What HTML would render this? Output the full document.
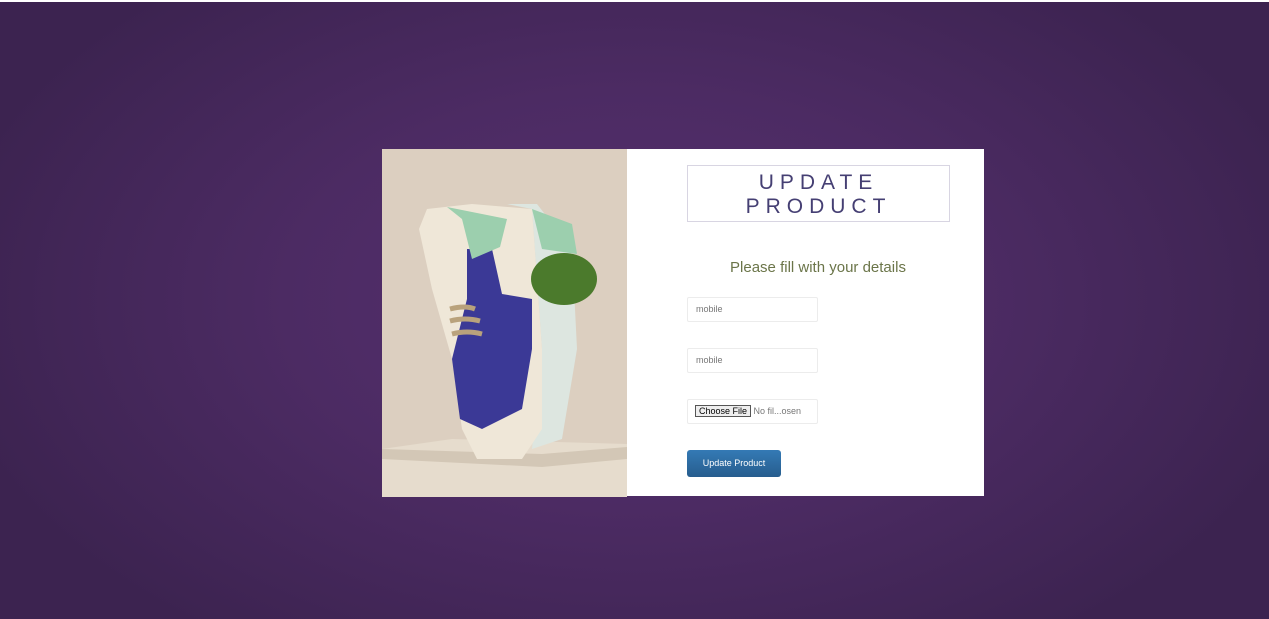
<!DOCTYPE html>
<html><head><style>
html,body{margin:0;padding:0}
body{width:1269px;height:619px;overflow:hidden;position:relative;font-family:"Liberation Sans",sans-serif;
background:radial-gradient(ellipse 700px 420px at 634px 300px,#562f70 0%,#4c2b63 50%,#3c2350 100%);}
.top{position:absolute;left:0;top:0;width:1269px;height:2px;background:#fff}
.img{position:absolute;left:382px;top:149px;width:245px;height:348px;overflow:hidden;background:#dccfc0}
.card{position:absolute;left:627px;top:149px;width:357px;height:347px;background:#fff}
.title{position:absolute;left:60px;top:16px;width:263px;height:57px;border:1px solid #d8d5e2;box-sizing:border-box;text-align:center;color:#453f73;font-size:21px;letter-spacing:6px;line-height:24px;padding-top:5px}
.sub{position:absolute;left:0;width:382px;top:110px;text-align:center;color:#6b7549;font-size:15px}
.in{position:absolute;left:60px;width:131px;height:25px;border:1px solid #ececec;border-radius:2px;box-sizing:border-box;font-size:9px;color:#777;padding:6px 0 0 8px}
.btn{position:absolute;left:60px;top:301px;width:94px;height:27px;border-radius:3px;background:linear-gradient(#347ab5,#275d8e);color:#fff;font-size:9px;text-align:center;line-height:27px}
.cf{display:inline-block;border:1px solid #555;background:#eee;color:#000;font-size:9px;padding:0 3px;line-height:10px;margin-left:-1px}
</style></head><body>
<div class="top"></div>
<div class="img">
<svg width="245" height="348" viewBox="0 0 245 348">
<rect width="245" height="348" fill="#dccfc0"/>
<polygon points="0,300 70,290 245,295 245,348 0,348" fill="#e6dccd"/>
<polygon points="0,300 160,305 245,298 245,310 160,318 0,310" fill="#d3c7b6"/>
<polygon points="125,55 155,55 190,100 195,200 180,290 150,300 160,200 150,60" fill="#dde6e0"/>
<polygon points="45,60 90,55 150,60 160,200 160,280 140,310 95,310 80,280 70,210 50,140 37,80" fill="#efe7d8"/>
<polygon points="85,100 110,100 120,145 150,150 150,200 140,260 100,280 78,270 70,210 85,150" fill="#3b3996"/>
<polygon points="65,58 125,70 118,98 90,110 80,70" fill="#9ccfae"/>
<polygon points="150,60 190,75 195,105 160,100" fill="#9ccfae"/>
<ellipse cx="182" cy="130" rx="33" ry="26" fill="#4b7a2c"/>
<path d="M68 160 q15 -4 25 0 M68 172 q15 -4 30 0 M70 185 q15 -4 30 0" stroke="#b9a27c" stroke-width="5" fill="none"/>
</svg>
</div>
<div class="card">
<div class="title">UPDATE<br>PRODUCT</div>
<div class="sub">Please fill with your details</div>
<div class="in" style="top:148px">mobile</div>
<div class="in" style="top:199px">mobile</div>
<div class="in" style="top:250px;padding-top:5px"><span class="cf">Choose File</span> No fil...osen</div>
<div class="btn">Update Product</div>
</div>
</body></html>
